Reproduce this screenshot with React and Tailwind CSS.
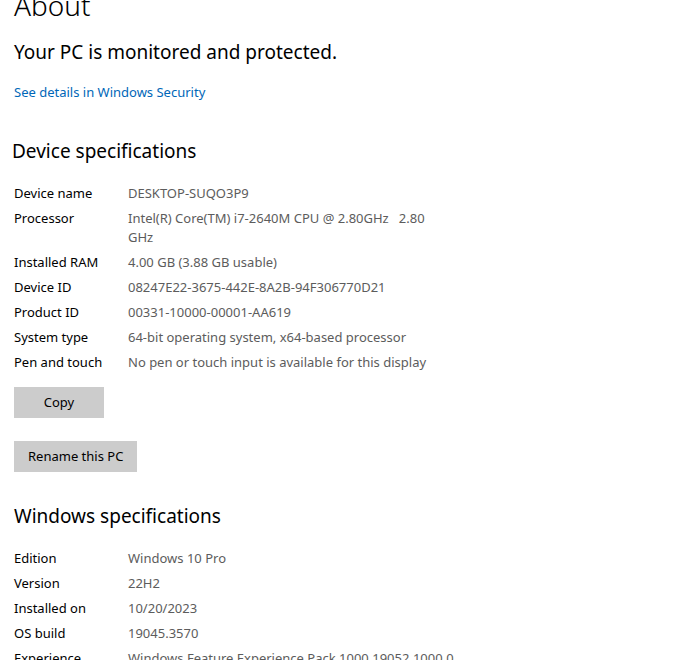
import React from "react";

const deviceSpecs = [
  ["Device name", "DESKTOP-SUQO3P9"],
  ["Processor", "Intel(R) Core(TM) i7-2640M CPU @ 2.80GHz   2.80 GHz"],
  ["Installed RAM", "4.00 GB (3.88 GB usable)"],
  ["Device ID", "08247E22-3675-442E-8A2B-94F306770D21"],
  ["Product ID", "00331-10000-00001-AA619"],
  ["System type", "64-bit operating system, x64-based processor"],
  ["Pen and touch", "No pen or touch input is available for this display"],
];

const windowsSpecs = [
  ["Edition", "Windows 10 Pro"],
  ["Version", "22H2"],
  ["Installed on", "10/20/2023"],
  ["OS build", "19045.3570"],
  ["Experience", "Windows Feature Experience Pack 1000.19052.1000.0"],
];

const SpecRows = ({ rows, wide }) => (
  <div className="flex flex-col gap-[6px]">
    {rows.map(([label, value]) => (
      <div key={label} className="flex text-[13px] leading-[19px]">
        <div className="w-[114px] shrink-0 text-black">{label}</div>
        <div
          className={
            wide
              ? "shrink-0 text-[#5c5c5c] whitespace-nowrap"
              : "w-[312px] shrink-0 text-[#5c5c5c] whitespace-pre-wrap"
          }
        >
          {value}
        </div>
      </div>
    ))}
  </div>
);

const App = () => {
  return (
    <div
      className="w-[692px] h-[660px] overflow-hidden bg-white pl-[14px] text-black"
      style={{ fontFamily: '"Segoe UI", "Noto Sans", sans-serif' }}
    >
      <h1 className="text-[28px] leading-[36px] mt-[-13px] font-light">About</h1>

      <p className="mt-[15px] text-[19px] leading-[28px]">Your PC is monitored and protected.</p>

      <a className="block mt-[17px] text-[13px] leading-[19px] text-[#0067b8]">
        See details in Windows Security
      </a>

      <h2 className="mt-[35px] ml-[-2px] text-[19px] leading-[28px]">Device specifications</h2>

      <div className="mt-[19px]">
        <SpecRows rows={deviceSpecs} />
      </div>

      <button className="mt-[15px] block w-[90px] h-[31px] bg-[#cccccc] text-[13px]">Copy</button>
      <button className="mt-[23px] block h-[31px] px-[14px] bg-[#cccccc] text-[13px]">
        Rename this PC
      </button>

      <h2 className="mt-[30px] text-[19px] leading-[28px]">Windows specifications</h2>

      <div className="mt-[19px]">
        <SpecRows rows={windowsSpecs} wide />
      </div>
    </div>
  );
};

export default App;
